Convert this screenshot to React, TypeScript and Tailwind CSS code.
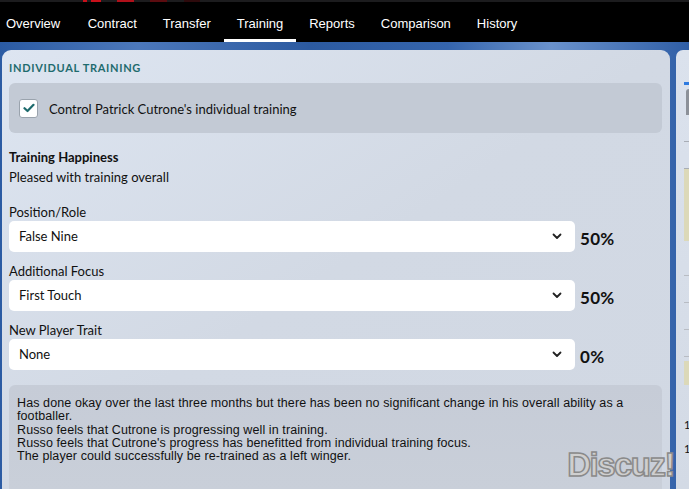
import React from "react";

const tabs = ["Overview", "Contract", "Transfer", "Training", "Reports", "Comparison", "History"];

function Chevron() {
  return (
    <svg width="10" height="7" viewBox="0 0 10 7" className="shrink-0">
      <path d="M1.5 1.5 L5 5 L8.5 1.5" fill="none" stroke="#222" strokeWidth="1.8" strokeLinecap="round" strokeLinejoin="round" />
    </svg>
  );
}

function Dropdown({ label, value, pct }: { label: string; value: string; pct: string }) {
  return (
    <div className="flex flex-col">
      <div className="text-[13px] leading-[16px] text-[#111] h-[17px] mt-[1px]">{label}</div>
      <div className="flex items-center">
        <div className="w-[566px] h-[31px] bg-white rounded-[5px] flex items-center justify-between pl-[10px] pr-[13px]">
          <span className="text-[13px] text-[#111]">{value}</span>
          <Chevron />
        </div>
        <span className="ml-[5px] mt-[5px] text-[17px] font-bold text-[#111] tracking-[0.3px]">{pct}</span>
      </div>
    </div>
  );
}

export default function App() {
  return (
    <div className="w-[689px] h-[489px] overflow-hidden bg-black flex flex-col" style={{ fontFamily: "Lato, 'Noto Sans', sans-serif" }}>
      {/* top strip */}
      <div className="h-[2px] bg-[#1c1c1e] flex shrink-0">
        <div className="ml-[83px] w-[4px] bg-[#c8101a]" />
        <div className="ml-[4px] w-[10px] bg-[#c8101a]" />
        <div className="ml-[16px] w-[17px] bg-[#b0101a]" />
        <div className="ml-[16px] w-[17px] bg-[#5c0c10]" />
        <div className="ml-[17px] w-[16px] bg-[#2e0a0c]" />
      </div>
      {/* nav */}
      <div className="h-[40px] bg-black flex items-stretch shrink-0" style={{ fontFamily: "'Liberation Sans', Arial, sans-serif" }}>
        {tabs.map((t, i) => (
          <div
            key={t}
            className={
              "relative flex items-center text-[13px] text-white " +
              (i === 0 ? "pl-[6px] pr-[14.5px]" : "px-[13px]")
            }
          >
            <span className="mt-[3px]">{t}</span>
            {t === "Training" && <div className="absolute left-0 right-0 bottom-0 h-[3px] bg-white" />}
          </div>
        ))}
      </div>
      {/* main */}
      <div
        className="flex-1 flex pt-[8px] pl-[2px] min-h-0"
        style={{ background: "linear-gradient(90deg,#2b5ba3 0%,#4c78bb 20%,#2c5aa0 45%,#3565ad 65%,#6a92cc 80%,#2f5ea6 100%)" }}
      >
        {/* left panel */}
        <div className="w-[668px] rounded-t-[9px] bg-gradient-to-br from-[#dde5f1] via-[#d2d9e4] to-[#d1d8e3] flex flex-col pl-[7px] pr-[8px] pt-[11px] shrink-0">
          <div className="text-[11px] font-bold text-[#1f6b6e] tracking-[0.7px] leading-[14px] h-[19px]">INDIVIDUAL TRAINING</div>
          <div className="mt-[3px] h-[50px] rounded-[6px] bg-[#c3cad5] flex items-center pl-[10px]">
            <div className="w-[19px] h-[19px] bg-white rounded-[3px] border border-[#9aa3ad] flex items-center justify-center">
              <svg width="12" height="10" viewBox="0 0 12 10">
                <path d="M1.5 5.2 L4.5 8 L10.5 1.8" fill="none" stroke="#1d6a6c" strokeWidth="2.2" strokeLinecap="round" strokeLinejoin="round" />
              </svg>
            </div>
            <span className="ml-[11px] mt-[3px] text-[13px] text-[#111]">Control Patrick Cutrone's individual training</span>
          </div>
          <div className="mt-[15px] text-[13px] font-bold text-[#111] leading-[18px]">Training Happiness</div>
          <div className="mt-[2px] text-[13px] text-[#111] leading-[18px]">Pleased with training overall</div>
          <div className="mt-[17px] flex flex-col gap-[10px]">
            <Dropdown label="Position/Role" value="False Nine" pct="50%" />
            <Dropdown label="Additional Focus" value="First Touch" pct="50%" />
            <Dropdown label="New Player Trait" value="None" pct="0%" />
          </div>
          <div className="mt-[15px] flex-1 rounded-t-[6px] bg-gradient-to-b from-[#c6ccd7] to-[#c9cfd9] pl-[8px] pr-[30px] pt-[12px] relative">
            <div className="text-[12.5px] leading-[13.3px] text-[#111] tracking-[0.1px]" style={{ fontFamily: "'Liberation Sans', Arial, sans-serif" }}>
              Has done okay over the last three months but there has been no significant change in his overall ability as a footballer.
              <br />
              Russo feels that Cutrone is progressing well in training.
              <br />
              Russo feels that Cutrone's progress has benefitted from individual training focus.
              <br />
              The player could successfully be re-trained as a left winger.
            </div>
            <div
              className="absolute right-[-12px] top-[55px] text-[33px] font-bold text-[#cfcfcf] tracking-[-1.5px]"
              style={{ fontFamily: "'Liberation Sans', Arial, sans-serif", WebkitTextStroke: "1.5px #8a8a8a" }}
            >
              Discuz!
            </div>
          </div>
        </div>
        {/* divider gap */}
        <div className="w-[6px] shrink-0" />
        {/* right panel */}
        <div className="flex-1 rounded-tl-[7px] bg-gradient-to-b from-[#dbe2ed] to-[#d3dae5] flex flex-col pl-[8px] pt-[32px] text-[11px] text-[#111]">
          <div className="h-[3px] bg-[#2f7be0]" />
          <div className="mt-[4px] ml-[2px] h-[26px] bg-[#8c9199] rounded-tl-[3px]" />
          <div className="mt-[26px] h-px bg-[#a8adb5]" />
          <div className="mt-[26px] h-px bg-[#a8adb5]" />
          <div className="h-[72px] bg-[#dcd9b9]" />
          <div className="mt-[34px] h-px bg-[#b8bcc3]" />
          <div className="mt-[26px] h-px bg-[#b8bcc3]" />
          <div className="mt-[26px] h-px bg-[#b8bcc3]" />
          <div className="mt-[26px] h-px bg-[#b8bcc3]" />
          <div className="mt-[4px] h-[24px] bg-[#dcd9b9]" />
          <div className="mt-[34px] text-[11px] leading-[12px]">1</div>
          <div className="mt-[12px] text-[11px] leading-[12px]">1</div>
        </div>
      </div>
    </div>
  );
}
